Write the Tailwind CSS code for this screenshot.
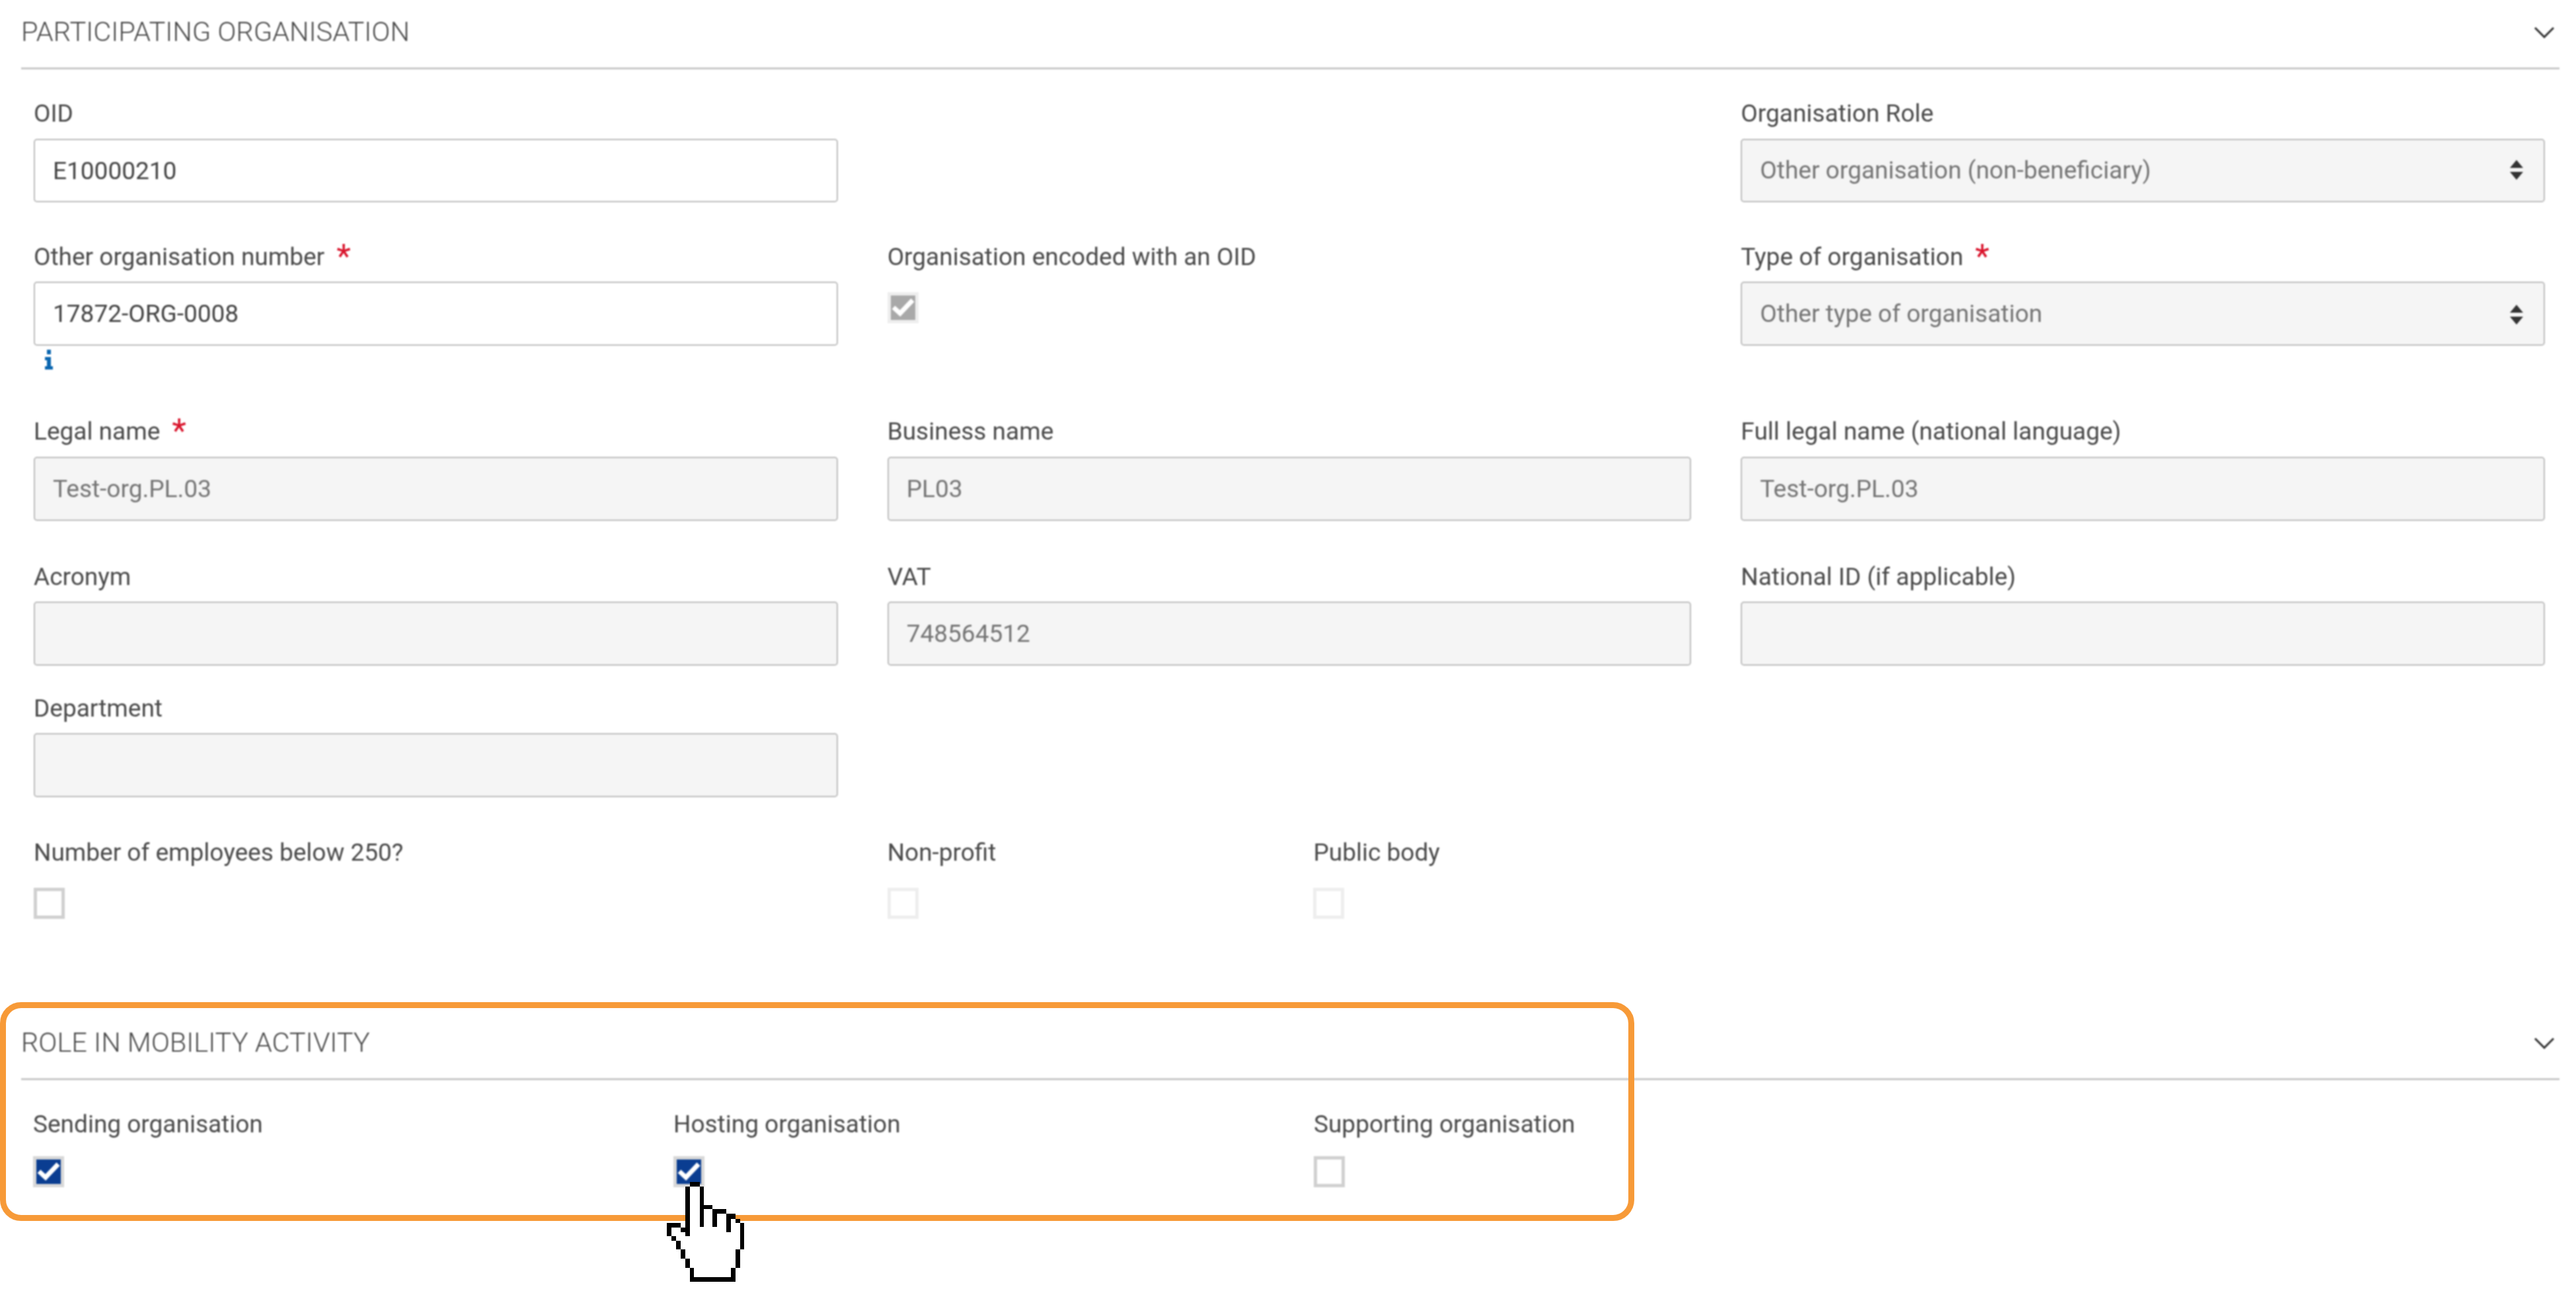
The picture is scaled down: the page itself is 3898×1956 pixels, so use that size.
<!DOCTYPE html>
<html lang="en">
<head>
    <meta charset="UTF-8">
    <title>Participating organisation</title>
    <script src="https://cdn.jsdelivr.net/npm/@tailwindcss/browser@4"></script>
</head>
<body class="bg-white">
<div class="relative w-[3898px] h-[1956px] overflow-hidden bg-white font-[Roboto,sans-serif] text-[37px] text-[#4a4a4a]">

  <div class="blur-[0.8px]">
    <!-- Participating organisation -->
    <div class="ml-[32px] mr-[25px] h-[105px] pb-[5px] border-b-[3px] border-[#c8c8c8] flex items-center justify-between">
        <span class="text-[41.5px] font-light text-[#4a4a4a]">PARTICIPATING ORGANISATION</span>
        <svg class="w-[32px] h-[18px] mr-[7px]" viewBox="0 0 32 18" fill="none" stroke="#333" stroke-width="3"><path d="M2 2 L16 16 L30 2"/></svg>
    </div>

    <div class="mt-[45px] ml-[51px] mr-[47px] grid grid-cols-3 gap-x-[75px] grid-rows-[216px_265px_219px_199px_221px]">
        <!-- row 1 -->
        <div>
            <div class="h-[60px] leading-[44px]">OID</div>
            <input class="w-full h-[96px] px-[27px] bg-white border-2 border-[#bdbdbd] rounded-[5px] text-[#444]" value="E10000210">
        </div>
        <div></div>
        <div>
            <div class="h-[60px] leading-[44px]">Organisation Role</div>
            <div class="relative">
                <select class="appearance-none w-full h-[96px] px-[27px] bg-[#f5f5f5] border-2 border-[#bdbdbd] rounded-[5px] text-[#757575]"><option>Other organisation (non-beneficiary)</option></select>
                <svg class="absolute right-[33px] top-[32px] w-[20px] h-[30px]" viewBox="0 0 20 30" fill="#333"><path d="M10 0 L20 12 L0 12 Z M0 18 L20 18 L10 30 Z"/></svg>
            </div>
        </div>

        <!-- row 2 -->
        <div>
            <div class="h-[60px] leading-[46px] flex gap-[18px]">Other organisation number <span class="text-[#d9132b] text-[50px] leading-[44px]">*</span></div>
            <input class="w-full h-[97px] px-[27px] bg-white border-2 border-[#bdbdbd] rounded-[5px] text-[#444]" value="17872-ORG-0008">
            <svg class="ml-[16px] mt-[6px] w-[14px] h-[30px]" viewBox="0 0 14 30" fill="#0a66b0"><path d="M4 0 H10 V7 H4 Z M1 11 H10 V25 H13 V30 H1 V25 H4 V16 H1 Z"/></svg>
        </div>
        <div>
            <div class="h-[60px] leading-[46px]">Organisation encoded with an OID</div>
            <div class="w-[47px] h-[47px] mt-[16px] border-[5px] border-[#eeeeee] bg-[#a9a9a9]">
                <svg class="w-full h-full" viewBox="0 0 37 37" fill="none" stroke="#fff" stroke-width="7"><path d="M4 18 L14 27 L33 7"/></svg>
            </div>
        </div>
        <div>
            <div class="h-[60px] leading-[46px] flex gap-[18px]">Type of organisation <span class="text-[#d9132b] text-[50px] leading-[44px]">*</span></div>
            <div class="relative">
                <select class="appearance-none w-full h-[97px] px-[27px] bg-[#f5f5f5] border-2 border-[#bdbdbd] rounded-[5px] text-[#757575]"><option>Other type of organisation</option></select>
                <svg class="absolute right-[33px] top-[35px] w-[20px] h-[30px]" viewBox="0 0 20 30" fill="#333"><path d="M10 0 L20 12 L0 12 Z M0 18 L20 18 L10 30 Z"/></svg>
            </div>
        </div>

        <!-- row 3 -->
        <div>
            <div class="h-[60px] leading-[44px] flex gap-[18px]">Legal name <span class="text-[#d9132b] text-[50px] leading-[42px]">*</span></div>
            <input class="w-full h-[97px] px-[27px] bg-[#f5f5f5] border-2 border-[#bdbdbd] rounded-[5px] text-[#757575]" value="Test-org.PL.03">
        </div>
        <div>
            <div class="h-[60px] leading-[44px]">Business name</div>
            <input class="w-full h-[97px] px-[27px] bg-[#f5f5f5] border-2 border-[#bdbdbd] rounded-[5px] text-[#757575]" value="PL03">
        </div>
        <div>
            <div class="h-[60px] leading-[44px]">Full legal name (national language)</div>
            <input class="w-full h-[97px] px-[27px] bg-[#f5f5f5] border-2 border-[#bdbdbd] rounded-[5px] text-[#757575]" value="Test-org.PL.03">
        </div>

        <!-- row 4 -->
        <div>
            <div class="h-[60px] leading-[46px]">Acronym</div>
            <input class="w-full h-[97px] px-[27px] bg-[#f5f5f5] border-2 border-[#bdbdbd] rounded-[5px] text-[#757575]">
        </div>
        <div>
            <div class="h-[60px] leading-[46px]">VAT</div>
            <input class="w-full h-[97px] px-[27px] bg-[#f5f5f5] border-2 border-[#bdbdbd] rounded-[5px] text-[#757575]" value="748564512">
        </div>
        <div>
            <div class="h-[60px] leading-[46px]">National ID (if applicable)</div>
            <input class="w-full h-[97px] px-[27px] bg-[#f5f5f5] border-2 border-[#bdbdbd] rounded-[5px] text-[#757575]">
        </div>

        <!-- row 5 -->
        <div>
            <div class="h-[60px] leading-[46px]">Department</div>
            <input class="w-full h-[97px] px-[27px] bg-[#f5f5f5] border-2 border-[#bdbdbd] rounded-[5px] text-[#757575]">
        </div>
    </div>

    <div class="ml-[51px] mr-[47px] h-[259px] grid grid-cols-6 gap-x-[75px]">
        <div class="col-span-2">
            <div class="h-[73px] leading-[40px]">Number of employees below 250?</div>
            <div class="w-[47px] h-[47px] border-[5px] border-[#d0d0d0] bg-white"></div>
        </div>
        <div>
            <div class="h-[73px] leading-[40px]">Non-profit</div>
            <div class="w-[47px] h-[47px] border-[5px] border-[#eeeeee] bg-white"></div>
        </div>
        <div>
            <div class="-ml-[1px] h-[73px] leading-[40px]">Public body</div>
            <div class="-ml-[1px] w-[47px] h-[47px] border-[5px] border-[#eeeeee] bg-white"></div>
        </div>
    </div>

    <!-- Role in mobility activity -->
    <div class="ml-[32px] mr-[25px] h-[105px] pb-[5px] border-b-[3px] border-[#c8c8c8] flex items-center justify-between">
        <span class="text-[41.5px] font-light text-[#4a4a4a]">ROLE IN MOBILITY ACTIVITY</span>
        <svg class="w-[32px] h-[18px] mr-[7px]" viewBox="0 0 32 18" fill="none" stroke="#333" stroke-width="3"><path d="M2 2 L16 16 L30 2"/></svg>
    </div>

    <div class="mt-[45px] ml-[50px] mr-[47px] grid grid-cols-4 gap-x-[75px]">
        <div>
            <div class="h-[70px] leading-[44px]">Sending organisation</div>
            <div class="w-[47px] h-[47px] border-[5px] border-[#d8d8d8] bg-[#0a3d91]">
                <svg class="w-full h-full" viewBox="0 0 37 37" fill="none" stroke="#fff" stroke-width="7"><path d="M4 18 L14 27 L33 7"/></svg>
            </div>
        </div>
        <div>
            <div class="h-[70px] leading-[44px]">Hosting organisation</div>
            <div class="w-[47px] h-[47px] border-[5px] border-[#d8d8d8] bg-[#0a3d91]">
                <svg class="w-full h-full" viewBox="0 0 37 37" fill="none" stroke="#fff" stroke-width="7"><path d="M4 18 L14 27 L33 7"/></svg>
            </div>
        </div>
        <div>
            <div class="h-[70px] leading-[44px]">Supporting organisation</div>
            <div class="w-[47px] h-[47px] border-[5px] border-[#d0d0d0] bg-white"></div>
        </div>
    </div>
  </div>

    <!-- highlight frame and cursor drawn over the form -->
    <div class="absolute left-0 top-[1516px] w-[2473px] h-[331px] border-[9px] border-[#f79a38] rounded-[32px]"></div>

    <svg class="absolute left-[1009px] top-[1788px] w-[117px] h-[151px]" viewBox="147 143 350 453" shape-rendering="crispEdges">
        <path fill="#fff" d="M250 143 H295 V247 H352 V267 H415 V288 H457 V310 H478 V328 H497 V450 H478 V533 H457 V596 H250 V533 H230 V492 H210 V450 H188 V410 H167 V390 H147 V328 H230 V163 H250 Z"/>
        <path fill="#000" d="M250 143 H295 V163 H250 Z
            M230 163 H250 V390 H230 Z
            M295 163 H313 V348 H295 Z
            M313 247 H352 V267 H313 Z
            M352 267 H415 V288 H375 V348 H352 Z
            M415 288 H457 V310 H437 V370 H415 Z
            M457 310 H478 V328 H457 Z
            M478 328 H497 V450 H478 Z
            M457 450 H478 V533 H457 Z
            M437 533 H457 V596 H250 V533 H270 V575 H437 Z
            M230 492 H250 V533 H230 Z
            M210 450 H230 V492 H210 Z
            M188 410 H210 V450 H188 Z
            M167 390 H188 V410 H167 Z
            M147 328 H210 V350 H167 V390 H147 Z
            M210 350 H230 V370 H210 Z"/>
    </svg>
</div>
</body>
</html>
